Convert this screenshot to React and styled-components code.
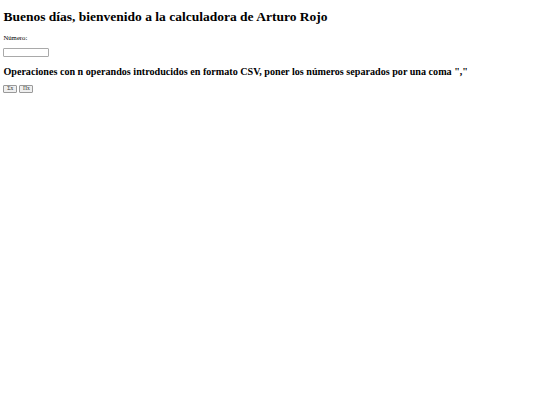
import React from "react";
import styled, { createGlobalStyle } from "styled-components";

// the page was shot at 1280px wide and shrunk to 540px
const s = 540 / 1280;
const px = (v) => `${(v * s).toFixed(2)}px`;

const GlobalStyle = createGlobalStyle`
  body {
    margin: ${px(8)};
    font-family: "Liberation Serif", "Times New Roman", serif;
    font-size: ${px(16)};
    color: #000;
    background: #fff;
  }
`;

const Title = styled.h1`
  font-size: ${px(32)};
  margin: 6px 0 ${px(21.44)};
`;

const Label = styled.p`
  font-size: ${px(16)};
  margin: ${px(16)} 0;
`;

const NumberInput = styled.input`
  display: block;
  box-sizing: border-box;
  width: 46px;
  height: 9px;
  padding: 0;
  font-size: ${px(13.33)};
  border: 1px solid #a9a9a9;
  border-radius: 1px;
  background: #fff;
`;

const Subtitle = styled.h2`
  font-size: ${px(24)};
  margin: ${px(19.92)} 0;
`;

const Buttons = styled.div`
  display: flex;
  gap: 2px;
`;

const OpButton = styled.button`
  box-sizing: border-box;
  width: 14px;
  height: 8px;
  padding: 0;
  font-family: "Liberation Serif", serif;
  font-size: ${px(13.33)};
  line-height: 1;
  color: #333;
  background: #efefef;
  border: 1px solid #9a9a9a;
  border-radius: 1px;
`;

export default function App() {
  return (
    <>
      <GlobalStyle />
      <Title>Buenos días, bienvenido a la calculadora de Arturo Rojo</Title>
      <Label>Número:</Label>
      <NumberInput type="text" />
      <Subtitle>
        Operaciones con n operandos introducidos en formato CSV, poner los
        números separados por una coma ","
      </Subtitle>
      <Buttons>
        <OpButton>Σx</OpButton>
        <OpButton>Πx</OpButton>
      </Buttons>
    </>
  );
}
